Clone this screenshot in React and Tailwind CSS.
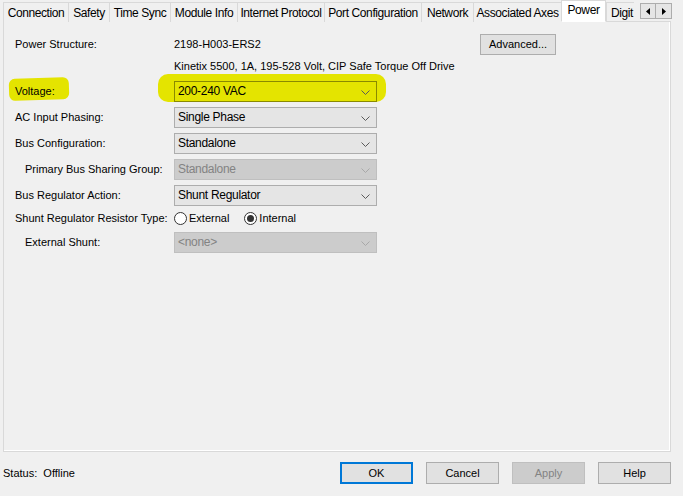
import React from "react";

const tabs = [
  ["Connection", 66],
  ["Safety", 42],
  ["Time Sync", 62],
  ["Module Info", 68],
  ["Internet Protocol", 88],
  ["Port Configuration", 98],
  ["Network", 53],
  ["Associated Axes", 89],
];

function Chevron({ color = "#5a5a5a" }) {
  return (
    <svg width="9" height="5" viewBox="0 0 9 5" className="absolute right-[6px] top-[8px]">
      <path d="M0.5 0.5 L4.5 4.5 L8.5 0.5" fill="none" stroke={color} strokeWidth="1" />
    </svg>
  );
}

function Select({ value, disabled, hl }) {
  const cls = disabled
    ? "bg-[#cccccc] border-[#bfbfbf] text-[#838383]"
    : hl
    ? "bg-transparent border-[#8a8a00] text-black"
    : "bg-[#e5e5e5] border-[#adadad] text-black";
  return (
    <div className={`relative w-[203px] h-[21px] border ${cls} pl-[3px] leading-[19px] whitespace-nowrap text-[12px] tracking-[-0.3px]`}>
      {value}
      <Chevron color={disabled ? "#a8a8a8" : "#5a5a5a"} />
    </div>
  );
}

function Row({ label, indent, children, h = "h-[26px]" }) {
  return (
    <div className={`flex items-center ${h}`}>
      <div className={`w-[159px] shrink-0 whitespace-nowrap ${indent ? "pl-[10px]" : ""}`}>{label}</div>
      {children}
    </div>
  );
}

function Radio({ checked, label }) {
  return (
    <div className="flex items-center gap-[2px]">
      <div className="w-[13px] h-[13px] rounded-full border border-[#333] bg-white flex items-center justify-center">
        {checked && <div className="w-[7px] h-[7px] rounded-full bg-[#333]" />}
      </div>
      <span>{label}</span>
    </div>
  );
}

function Btn({ children, cls = "" }) {
  return (
    <div className={`w-[73px] h-[22px] flex items-center justify-center border ${cls}`}>
      {children}
    </div>
  );
}

export default function App() {
  return (
    <div
      className="w-[683px] h-[496px] bg-[#f0f0f0] text-[11px] text-black relative overflow-hidden"
      style={{ fontFamily: '"Liberation Sans", Arial, sans-serif' }}
    >
      {/* tabs */}
      <div className="flex items-end h-[22px] pl-[3px] relative z-10 text-[12px] tracking-[-0.4px]">
        {tabs.map(([t, w]) => (
          <div
            key={t}
            style={{ width: w }}
            className="h-[20px] border border-[#d9d9d9] border-b-0 -ml-px first:ml-0 flex items-center justify-center bg-[#f0f0f0] leading-none whitespace-nowrap pt-px"
          >
            {t}
          </div>
        ))}
        <div className="w-[45px] h-[22px] border border-[#d9d9d9] border-b-white bg-white -ml-px flex items-center justify-center leading-none pb-[2px]">
          Power
        </div>
        <div className="w-[28px] h-[20px] border border-[#d9d9d9] border-b-0 border-r-0 flex items-center pl-[4px] leading-none overflow-hidden whitespace-nowrap pt-px">
          Digit
        </div>
        <div className="absolute left-[640px] top-[3px] flex">
          <div className="w-[16px] h-[16px] border border-[#adadad] bg-[#e5e5e5] flex items-center justify-center">
            <svg width="4" height="7" viewBox="0 0 4 7"><path d="M4 0 L0 3.5 L4 7Z" fill="#000" /></svg>
          </div>
          <div className="w-[16px] h-[16px] border border-[#adadad] border-l-0 bg-[#e5e5e5] flex items-center justify-center">
            <svg width="4" height="7" viewBox="0 0 4 7"><path d="M0 0 L4 3.5 L0 7Z" fill="#000" /></svg>
          </div>
        </div>
      </div>

      {/* panel */}
      <div className="ml-[3px] w-[668px] h-[431px] -mt-px border border-[#d9d9d9] relative">
        <div className="absolute inset-0 border-r border-b border-white pointer-events-none" />
        {/* highlight */}
        <div className="absolute left-[5px] top-[56px] w-[60px] h-[22px] bg-[#e4e400] rounded-[6px] -rotate-2" />
        <div className="absolute left-[154px] top-[52px] w-[228px] h-[28px] bg-[#e4e400] rounded-[10px]" />

        <div className="relative pl-[11px] pt-[11px]">
          <div className="flex items-center h-[22px]">
            <div className="w-[159px] shrink-0">Power Structure:</div>
            <div className="w-[306px] shrink-0">2198-H003-ERS2</div>
            <div className="w-[76px] h-[21px] border border-[#adadad] bg-[#e1e1e1] flex items-center justify-center">
              Advanced...
            </div>
          </div>
          <div className="h-[23px] pl-[159px] flex items-center whitespace-nowrap">
            Kinetix 5500, 1A, 195-528 Volt, CIP Safe Torque Off Drive
          </div>
          <Row label="Voltage:">
            <Select value="200-240 VAC" hl />
          </Row>
          <Row label="AC Input Phasing:">
            <Select value="Single Phase" />
          </Row>
          <Row label="Bus Configuration:">
            <Select value="Standalone" />
          </Row>
          <Row label="Primary Bus Sharing Group:" indent>
            <Select value="Standalone" disabled />
          </Row>
          <Row label="Bus Regulator Action:">
            <Select value="Shunt Regulator" />
          </Row>
          <Row label="Shunt Regulator Resistor Type:" h="h-[20px]">
            <div className="flex gap-[15px]">
              <Radio label="External" />
              <Radio label="Internal" checked />
            </div>
          </Row>
          <Row label="External Shunt:" indent h="h-[28px]">
            <Select value="<none>" disabled />
          </Row>
        </div>
      </div>

      {/* bottom */}
      <div className="flex items-center h-[42px] pl-[3px] pr-[12px]">
        <div className="flex-1">Status:&nbsp; Offline</div>
        <div className="flex gap-[13px]">
          <Btn cls="border-[#0078d7] border-2 bg-[#e1e1e1]">OK</Btn>
          <Btn cls="border-[#adadad] bg-[#e1e1e1]">Cancel</Btn>
          <Btn cls="border-[#bfbfbf] bg-[#cccccc] text-[#838383]">Apply</Btn>
          <Btn cls="border-[#adadad] bg-[#e1e1e1]">Help</Btn>
        </div>
      </div>
    </div>
  );
}
